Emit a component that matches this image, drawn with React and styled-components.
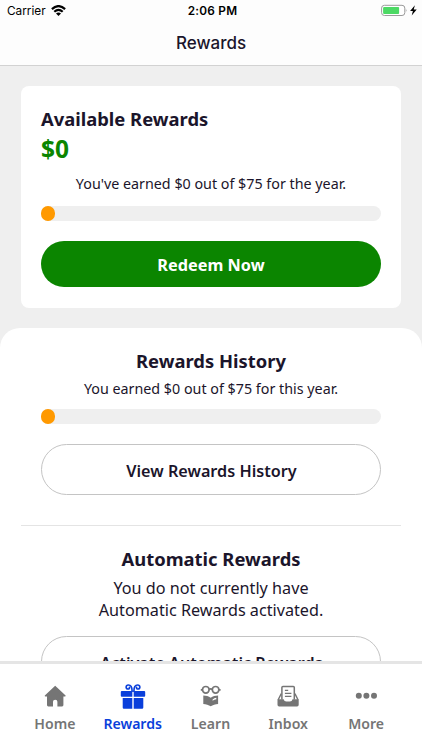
import React from "react";
import styled, { createGlobalStyle } from "styled-components";

const GlobalStyle = createGlobalStyle`
	* {
		box-sizing: border-box;
	}
	body {
		margin: 0;
		background: #efefef;
		color: #1b152b;
		font-family: "Noto Sans", "Open Sans", sans-serif;
	}
	h1, h2, p {
		margin: 0;
	}
	button {
		font-family: inherit;
		cursor: pointer;
	}
`;

const HomeIcon = () => (
	<svg width="26" height="26" viewBox="0 0 26 26" fill="currentColor">
		<path d="M13.2 2.8 L23.6 12.4 Q23.9 13.5 22.9 13.5 H21.4 V22 Q21.4 23.4 20.1 23.4 H15.4 V18.8 Q15.4 16.8 13.2 16.8 Q11 16.8 11 18.8 V23.4 H6.3 Q5 23.4 5 22 V13.5 H3.5 Q2.5 13.5 2.8 12.4 Z" />
	</svg>
);

const GiftIcon = () => (
	<svg width="26" height="26" viewBox="0 0 26 26" fill="currentColor">
		<path
			d="M12.1 8.2 C12.1 4.6 10.8 2 8.4 2 C5.6 2 5.4 6 8 6 C9.2 6 9.7 5.1 9.4 4.3 M13.9 8.2 C13.9 4.6 15.2 2 17.6 2 C20.4 2 20.6 6 18 6 C16.8 6 16.3 5.1 16.6 4.3"
			fill="none"
			stroke="currentColor"
			strokeWidth="1.7"
			strokeLinecap="round"
		/>
		<path d="M1.8 8 H12.3 V13.7 H1.8 Q0.8 13.7 0.8 12.7 V9 Q0.8 8 1.8 8Z M13.7 8 H24.2 Q25.2 8 25.2 9 V12.7 Q25.2 13.7 24.2 13.7 H13.7Z M2.7 15 H12.3 V25.8 H3.9 Q2.7 25.8 2.7 24.6Z M13.7 15 H23.3 V24.6 Q23.3 25.8 22.1 25.8 H13.7Z" />
	</svg>
);

const LearnIcon = () => (
	<svg width="26" height="26" viewBox="0 0 26 26" fill="currentColor">
		<g fill="none" stroke="currentColor" strokeWidth="1.7">
			<circle cx="8.8" cy="6.8" r="3.3" />
			<circle cx="18.6" cy="6.8" r="3.3" />
			<path d="M11.9 6.5 Q13.7 5.3 15.5 6.5 M5.6 6.8 H3.8 M21.8 6.8 H23.6" />
		</g>
		<path d="M6.3 12.4 C9 12.4 11.7 13.2 13.7 14.7 C15.7 13.2 18.4 12.4 21.1 12.4 V20.9 C18.4 20.9 15.7 21.8 13.7 23.3 C11.7 21.8 9 20.9 6.3 20.9Z" />
		<path d="M15.6 16.4 Q17.3 15.2 19.3 14.8 V16.3 Q17.3 16.7 15.6 17.8Z" fill="#fff" />
	</svg>
);

const InboxIcon = () => (
	<svg width="26" height="26" viewBox="0 0 26 26" fill="currentColor">
		<path
			d="M6.9 16.6 V4.6 Q6.9 3.6 7.9 3.6 H18.3 Q19.3 3.6 19.3 4.6 V16.6"
			fill="none"
			stroke="currentColor"
			strokeWidth="1.5"
		/>
		<path
			d="M9.9 7.3 H13.2 M9.9 10.4 H16.4 M9.9 13.4 H16.4"
			stroke="currentColor"
			strokeWidth="1.2"
		/>
		<path
			d="M6.3 10.6 L3.2 16.8 M19.9 10.6 L23 16.8"
			stroke="currentColor"
			strokeWidth="1.4"
		/>
		<path d="M2.5 16.2 H8.6 Q9.2 18.6 11.3 18.6 H14.9 Q17 18.6 17.6 16.2 H23.7 V21.8 Q23.7 23.4 22.1 23.4 H4.1 Q2.5 23.4 2.5 21.8Z" />
	</svg>
);

const MoreIcon = () => (
	<svg width="26" height="26" viewBox="0 0 26 26" fill="currentColor">
		<circle cx="5.8" cy="12.8" r="3" />
		<circle cx="13.4" cy="12.8" r="3" />
		<circle cx="21" cy="12.8" r="3" />
	</svg>
);

const WifiIcon = () => (
	<svg width="15" height="11" viewBox="0 0 15 11">
		<g fill="none" stroke="#000" strokeWidth="2.2">
			<path d="M0.9 4.1 Q7.5 -1.9 14.1 4.1" />
			<path d="M3.3 6.8 Q7.5 3 11.7 6.8" />
		</g>
		<path d="M5 8.5 Q7.5 6.4 10 8.5 L7.5 10.9Z" />
	</svg>
);

const BatteryIcon = () => (
	<svg width="37" height="13" viewBox="0 0 37 13">
		<rect x="0.6" y="1.3" width="23.2" height="10.2" rx="2.8" fill="#fff" stroke="#9b9b9b" />
		<rect x="2.1" y="2.9" width="16" height="7" rx="1" fill="#4cd964" />
		<path d="M24.9 4.7 Q26.3 6.4 24.9 8.1Z" fill="#9b9b9b" />
		<path d="M33.9 1.2 L29.1 7.1 H31.9 L30.7 11.5 L35.7 5.4 H32.7Z" fill="#000" />
	</svg>
);

const tabs = [
	{ label: "Home", Icon: HomeIcon },
	{ label: "Rewards", Icon: GiftIcon, active: true },
	{ label: "Learn", Icon: LearnIcon },
	{ label: "Inbox", Icon: InboxIcon },
	{ label: "More", Icon: MoreIcon },
];

const App = () => {
	return (
		<Screen>
			<GlobalStyle />
			<Header>
				<StatusBar>
					<Carrier>
						Carrier <WifiIcon />
					</Carrier>
					<Time>2:06 PM</Time>
					<Battery>
						<BatteryIcon />
					</Battery>
				</StatusBar>
				<PageTitle>Rewards</PageTitle>
			</Header>
			<Content>
				<Card>
					<Heading>Available Rewards</Heading>
					<Amount>$0</Amount>
					<Earned>You've earned $0 out of $75 for the year.</Earned>
					<Progress>
						<Fill />
					</Progress>
					<RedeemButton type="button">Redeem Now</RedeemButton>
				</Card>
				<Panel>
					<Section>
						<Heading>Rewards History</Heading>
						<Earned>You earned $0 out of $75 for this year.</Earned>
						<Progress>
							<Fill />
						</Progress>
						<OutlineButton type="button">View Rewards History</OutlineButton>
					</Section>
					<Divider />
					<Section $last>
						<Heading>Automatic Rewards</Heading>
						<Message>
							You do not currently have
							<br />
							Automatic Rewards activated.
						</Message>
						<OutlineButton type="button" $tight>
							Activate Automatic Rewards
						</OutlineButton>
					</Section>
				</Panel>
			</Content>
			<TabBar>
				{tabs.map(({ label, Icon, active }) => (
					<Tab key={label} $active={active}>
						<Icon />
						<span>{label}</span>
					</Tab>
				))}
			</TabBar>
		</Screen>
	);
};

const Screen = styled.div`
	height: 750px;
	width: 422px;
	display: flex;
	flex-direction: column;
	overflow: hidden;
`;

const Header = styled.header`
	flex: none;
	height: 66px;
	background: #fdfdfd;
	border-bottom: 1px solid #d2d2d2;
	font-family: Inter, "Liberation Sans", sans-serif;
`;

const StatusBar = styled.div`
	display: grid;
	grid-template-columns: 1fr auto 1fr;
	align-items: center;
	height: 21px;
	padding: 0 4px 0 7px;
	font-size: 11.8px;
	color: #000;
`;

const Carrier = styled.div`
	display: flex;
	align-items: center;
	gap: 5px;
`;

const Time = styled.div`
	font-weight: 600;
	letter-spacing: 0.25px;
`;

const Battery = styled.div`
	display: flex;
	justify-content: flex-end;
`;

const PageTitle = styled.h1`
	font-size: 17px;
	line-height: 44px;
	font-weight: 550;
	text-align: center;
`;

const Content = styled.main`
	flex: 1;
	min-height: 0;
	overflow: hidden;
	padding-top: 20px;
`;

const Card = styled.section`
	height: 222px;
	margin: 0 21px 20px;
	padding: 20px;
	border-radius: 8px;
	background: #fff;
`;

const Panel = styled.div`
	border-radius: 20px 20px 0 0;
	background: #fff;
	text-align: center;
`;

const Section = styled.section`
	padding: ${({ $last }) => ($last ? "20px 41px" : "20px 41px 30px")};
`;

const Heading = styled.h2`
	font-size: 18.4px;
	line-height: 25px;
	padding-bottom: 2px;
	font-weight: 700;
`;

const Amount = styled.p`
	font-size: 24.5px;
	line-height: 31px;
	font-weight: 700;
	color: #0b8500;
`;

const Earned = styled.p`
	font-size: 14.3px;
	line-height: 20px;
	text-align: center;
	${Card} & {
		margin-top: 10px;
	}
	${Panel} & {
		margin-top: 4px;
	}
`;

const Progress = styled.div`
	height: 15px;
	margin-top: 12px;
	border-radius: 8px;
	background: #efefef;
	${Panel} & {
		margin-top: 10px;
	}
`;

const Fill = styled.div`
	width: 14px;
	height: 100%;
	border-radius: 7px;
	background: #ff9900;
`;

const RedeemButton = styled.button`
	display: block;
	width: 100%;
	height: 46px;
	margin-top: 20px;
	padding: 1px 0 0;
	border: none;
	border-radius: 23px;
	background: #0b8500;
	color: #fff;
	font-size: 16.3px;
	font-weight: 700;
`;

const OutlineButton = styled.button`
	display: block;
	width: 100%;
	height: 51px;
	margin-top: ${({ $tight }) => ($tight ? "15px" : "20px")};
	padding: 2px 0 0 1px;
	border: 1px solid #c4c4c4;
	border-radius: 26px;
	background: #fff;
	color: #1b152b;
	font-size: 16.2px;
	font-weight: 600;
`;

const Message = styled.p`
	font-size: 16.2px;
	line-height: 22px;
	margin-top: 4px;
`;

const Divider = styled.hr`
	height: 1px;
	margin: 0 21px;
	border: none;
	background: #e4e4e4;
`;

const TabBar = styled.nav`
	flex: none;
	display: flex;
	height: 89px;
	padding: 19px 17px 0 16px;
	border-top: 3px solid #e5e5e5;
	background: #fff;
`;

const Tab = styled.a`
	flex: 1 1 0;
	display: flex;
	flex-direction: column;
	align-items: center;
	gap: 5px;
	font-size: 14.1px;
	line-height: 20px;
	font-weight: 600;
	color: ${({ $active }) => ($active ? "#0a3fdb" : "#757575")};
	cursor: pointer;
`;

export default App;
